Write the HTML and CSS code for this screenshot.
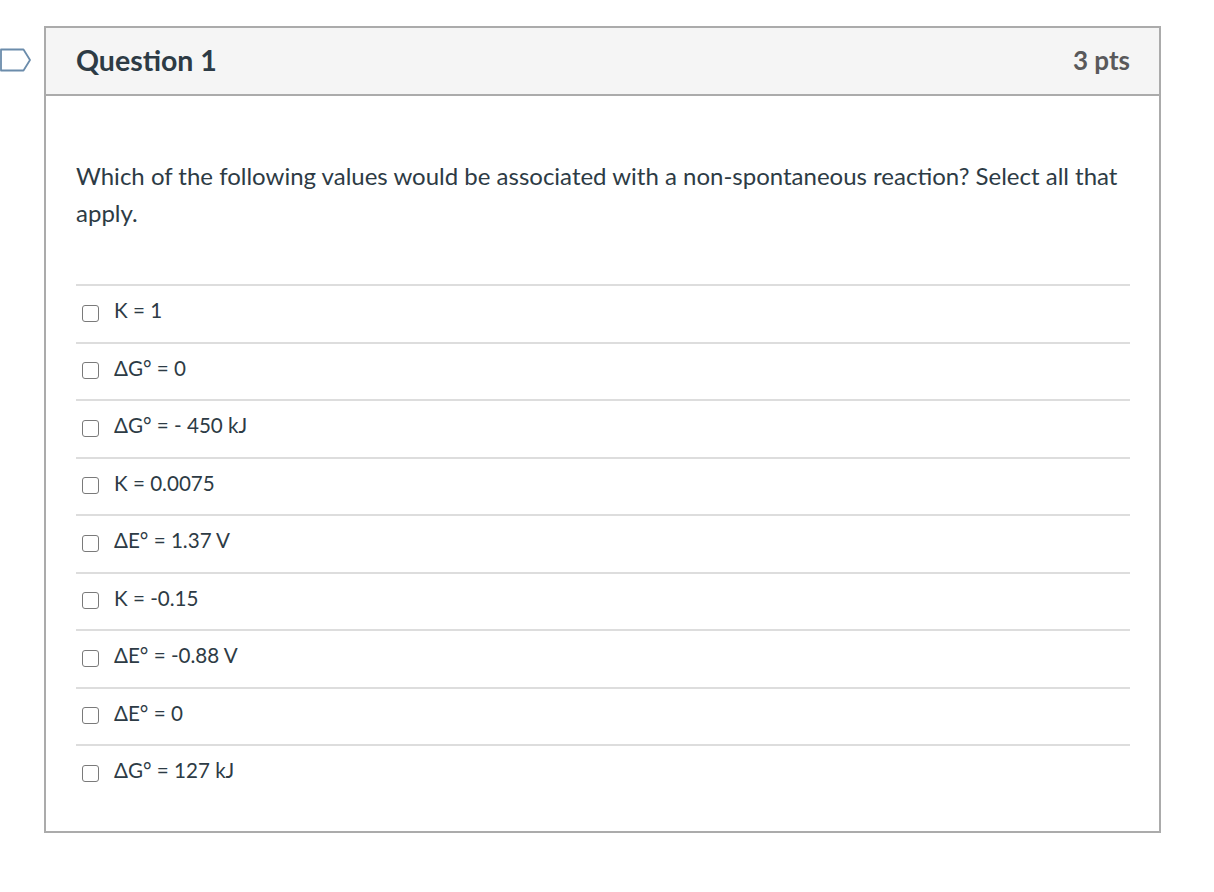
FILE: index.html
```html
<!DOCTYPE html>
<html>
<head>
<meta charset="utf-8">
<link rel="stylesheet" href="styles.css">
</head>
<body>
<div class="card">
  <svg class="flag" width="34" height="25" viewBox="0 0 34 25">
    <path d="M1 1.5 H23.5 L30 12 L23.5 22.5 H1 Z" fill="none" stroke="#6b8cab" stroke-width="1.8" stroke-linejoin="round"/>
  </svg>
  <div class="header">
    <div class="title">Question 1</div>
    <div class="pts">3 pts</div>
  </div>
  <div class="body">
    <p class="question">Which of the following values would be associated with a non-spontaneous reaction? Select all that apply.</p>
    <div class="answers">
      <label class="row"><span class="box"></span><span class="txt">K = 1</span></label>
      <label class="row"><span class="box"></span><span class="txt">ΔG° = 0</span></label>
      <label class="row"><span class="box"></span><span class="txt">ΔG° = - 450 kJ</span></label>
      <label class="row"><span class="box"></span><span class="txt">K = 0.0075</span></label>
      <label class="row"><span class="box"></span><span class="txt">ΔE° = 1.37 V</span></label>
      <label class="row"><span class="box"></span><span class="txt">K = -0.15</span></label>
      <label class="row"><span class="box"></span><span class="txt">ΔE° = -0.88 V</span></label>
      <label class="row"><span class="box"></span><span class="txt">ΔE° = 0</span></label>
      <label class="row"><span class="box"></span><span class="txt">ΔG° = 127 kJ</span></label>
    </div>
  </div>
</div>
</body>
</html>
```
FILE: styles.css
```css
html, body {
  margin: 0;
  padding: 0;
  background: #fff;
}
body {
  font-family: Lato, "Noto Sans", sans-serif;
  color: #2d3b45;
}
.card {
  position: relative;
  margin: 26px 0 0 44px;
  width: 1113px;
  border: 2px solid #ababab;
}
.flag {
  position: absolute;
  left: -46px;
  top: 20px;
}
.header {
  display: flex;
  justify-content: space-between;
  align-items: center;
  height: 66px;
  padding: 0 29px 0 30px;
  background: #f5f5f5;
  border-bottom: 2px solid #ababab;
}
.title {
  font-size: 28.5px;
  font-weight: 700;
  color: #2d3b45;
  margin-top: -2px;
}
.pts {
  font-size: 26px;
  font-weight: 700;
  color: #59595b;
  margin-top: -2px;
}
.body {
  padding: 61px 29px 29px 30px;
}
.question {
  margin: 0;
  font-size: 24px;
  line-height: 37px;
  color: #2d3b45;
}
.answers {
  margin-top: 53px;
}
.row {
  display: flex;
  align-items: center;
  height: 55.5px;
  border-top: 2px solid #dddddd;
  box-sizing: content-box;
}
.box {
  box-sizing: border-box;
  width: 17px;
  height: 17px;
  margin: -1px 0 0 6px;
  border: 1.5px solid #7a7a7a;
  border-radius: 3px;
  background: #fff;
}
.txt {
  margin: -7px 0 0 15px;
  font-size: 20.6px;
  color: #2d3b45;
}
```
